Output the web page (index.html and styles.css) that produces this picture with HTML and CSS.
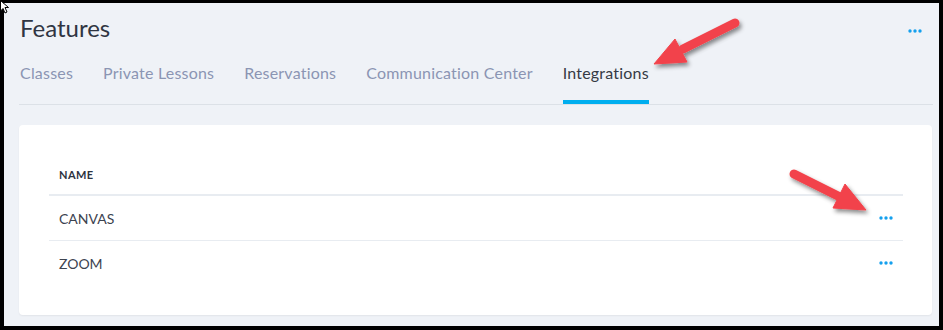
FILE: index.html
```html
<!DOCTYPE html>
<html lang="en">

<head>
    <meta charset="UTF-8">
    <meta name="viewport" content="width=device-width, initial-scale=1.0">
    <title>Features</title>
    <link rel="stylesheet" href="styles.css">
</head>

<body>
    <div class="screen">
        <div class="header">
            <h1 class="title">Features</h1>
            <svg class="dots" width="14" height="4" viewBox="0 0 14 4"><circle cx="2" cy="2" r="1.7"/><circle cx="7" cy="2" r="1.7"/><circle cx="12" cy="2" r="1.7"/></svg>
        </div>
        <div class="tabs">
            <div class="tab">Classes</div>
            <div class="tab">Private Lessons</div>
            <div class="tab">Reservations</div>
            <div class="tab">Communication Center</div>
            <div class="tab active">Integrations</div>
        </div>

        <div class="card">
            <table>
                <tr>
                    <th>NAME</th>
                    <th></th>
                </tr>
                <tr>
                    <td>CANVAS</td>
                    <td class="act"><svg class="dots" width="14" height="4" viewBox="0 0 14 4"><circle cx="2" cy="2" r="1.7"/><circle cx="7" cy="2" r="1.7"/><circle cx="12" cy="2" r="1.7"/></svg></td>
                </tr>
                <tr>
                    <td>ZOOM</td>
                    <td class="act"><svg class="dots" width="14" height="4" viewBox="0 0 14 4"><circle cx="2" cy="2" r="1.7"/><circle cx="7" cy="2" r="1.7"/><circle cx="12" cy="2" r="1.7"/></svg></td>
                </tr>
            </table>
        </div>
    </div>

    <!-- annotation arrows drawn over the screenshot -->
    <svg class="marks" width="943" height="330" viewBox="0 0 943 330">
        <defs>
            <filter id="shadow" x="-20%" y="-20%" width="140%" height="140%">
                <feDropShadow dx="2" dy="3" stdDeviation="2" flood-color="#000" flood-opacity="0.45"/>
            </filter>
        </defs>
        <g filter="url(#shadow)" fill="#f2434b" stroke="#f2434b">
            <line x1="735" y1="23" x2="683" y2="49" stroke-width="9" stroke-linecap="round"/>
            <polygon points="654,64 687,62 675,39" stroke-width="1" stroke-linejoin="round"/>
            <line x1="794" y1="174" x2="840" y2="197" stroke-width="9" stroke-linecap="round"/>
            <polygon points="866,210 833,208 845,184" stroke-width="1" stroke-linejoin="round"/>
        </g>
        <path class="cursor" d="M0.5 0.5 L0.5 11 L3 8.5 L5 13 L7 12 L5 7.5 L8.5 7.5 Z"/>
    </svg>
</body>

</html>
```

FILE: styles.css
```css
body {
    margin: 0;
    background-color: #000;
    font-family: "Lato", "Open Sans", sans-serif;
    position: relative;
}

.screen {
    margin: 3px 4px 4px 4px;
    height: 323px;
    box-sizing: border-box;
    background-color: #eff2f7;
    padding: 9px 6px 0 15px;
    overflow: hidden;
}

.header {
    display: flex;
    justify-content: space-between;
    align-items: center;
    padding-left: 1px;
}

.title {
    margin: 0;
    font-size: 24px;
    line-height: 32px;
    font-weight: 400;
    color: #2f3542;
}

.header .dots {
    margin-right: 11px;
    margin-top: 5px;
}

.dots {
    display: block;
    fill: #14a0ee;
}

.tabs {
    display: flex;
    gap: 30px;
    margin-top: 19px;
    padding-left: 1px;
    border-bottom: 1px solid #dce1e7;
}

.tab {
    font-size: 16px;
    line-height: 20px;
    letter-spacing: 0.2px;
    color: #8b95b3;
    padding-bottom: 17px;
    border-bottom: 4px solid transparent;
}

.tab.active {
    color: #353a45;
    border-bottom-color: #00aeef;
}

.card {
    margin-top: 20px;
    margin-right: 1px;
    height: 190px;
    box-sizing: border-box;
    background-color: #fff;
    border-radius: 4px;
    box-shadow: 0 1px 2px rgba(0, 0, 0, 0.06);
    padding: 30px 29px 30px 30px;
}

table {
    width: 100%;
    border-collapse: collapse;
}

th {
    height: 39px;
    padding: 0 10px;
    text-align: left;
    font-size: 11px;
    font-weight: 700;
    letter-spacing: 0.4px;
    color: #2d3340;
    border-bottom: 2px solid #e8ecf1;
}

td {
    height: 44px;
    padding: 0 10px;
    font-size: 14px;
    color: #3d434f;
}

tr:nth-child(2) td {
    border-bottom: 1px solid #e8ecf1;
}

td.act {
    width: 14px;
}

.marks {
    position: absolute;
    top: 0;
    left: 0;
}

.cursor {
    fill: #fff;
    stroke: #000;
    stroke-width: 1;
}
```
